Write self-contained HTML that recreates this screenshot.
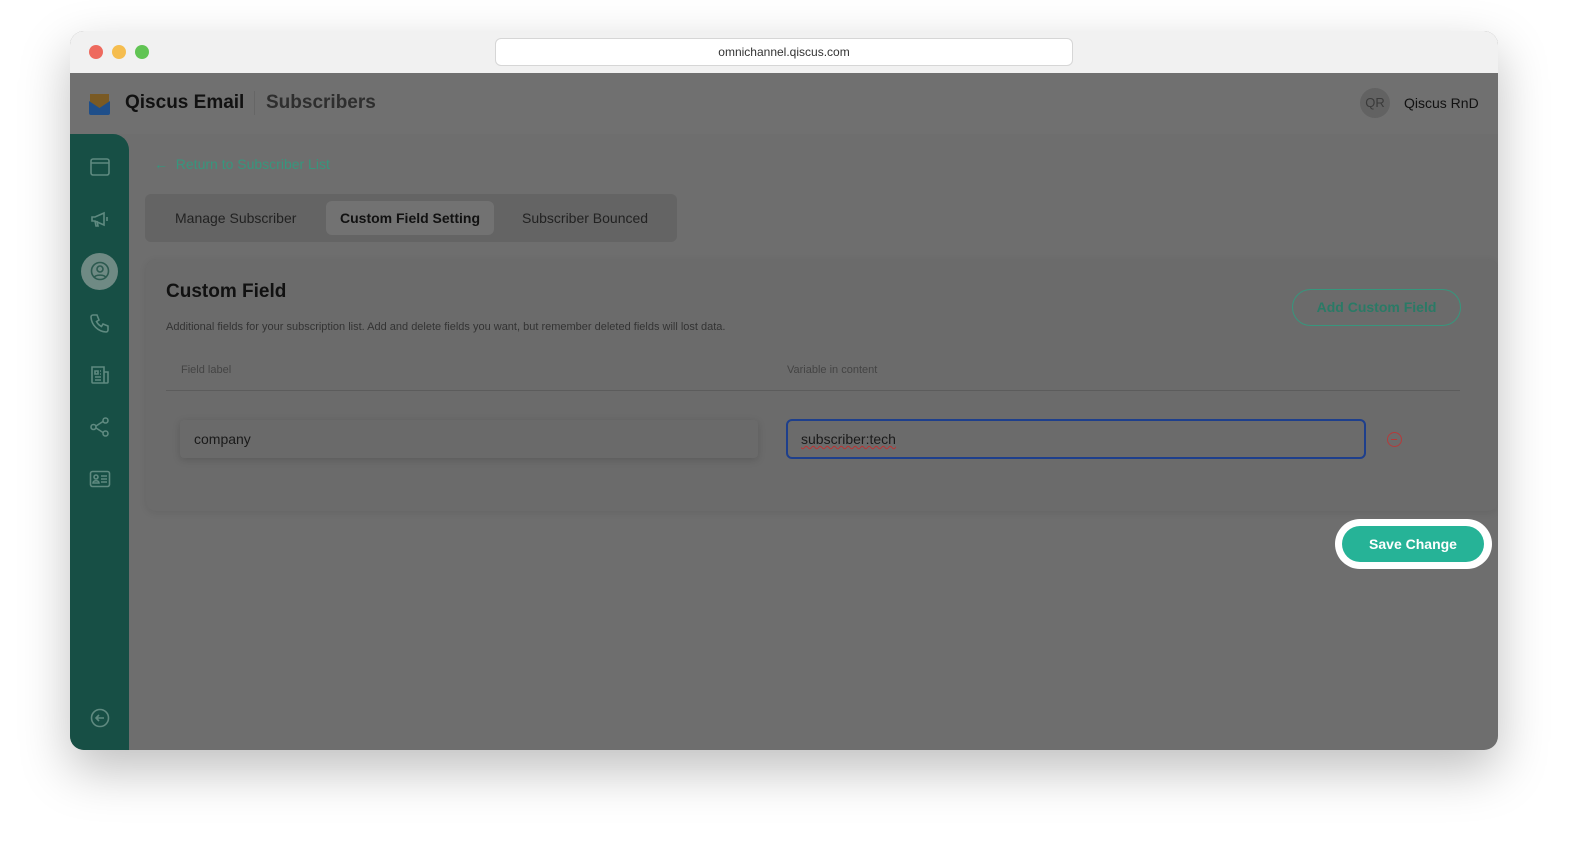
<!DOCTYPE html>
<html style="width:1580px;height:866px;overflow:hidden"><head><meta charset="utf-8"><style>
*{box-sizing:border-box;margin:0;padding:0}
body{width:1580px;height:866px;background:#fff;font-family:"Liberation Sans",sans-serif;position:relative;overflow:hidden}
.win{position:absolute;left:70px;top:31px;width:1428px;height:719px;border-radius:14px;overflow:hidden;box-shadow:0 20px 50px rgba(0,0,0,.25);background:#6e6e6e}
.tb{position:absolute;left:0;top:0;width:100%;height:42px;background:#f1f1f1}
.dot{position:absolute;top:14px;width:14px;height:14px;border-radius:50%}
.url{position:absolute;left:425px;top:7px;width:578px;height:28px;background:#fff;border:1px solid #d6d6d6;border-radius:6px;font-size:12px;color:#333;text-align:center;line-height:26px}
.hdr{position:absolute;left:0;top:42px;width:100%;height:61px;background:#707070}
.side{position:absolute;left:0;top:103px;width:59px;height:616px;background:#174f45;border-top-right-radius:16px}
.ic{position:absolute;left:19px;width:22px;height:22px}
.card{position:absolute;left:76px;top:228px;width:1352px;height:252px;background:#6b6b6b;border-radius:10px;box-shadow:0 2px 8px rgba(0,0,0,.08)}
</style></head><body>
<div class="win">
 <div class="tb">
  <div class="dot" style="left:19px;background:#ee6a5e"></div>
  <div class="dot" style="left:42px;background:#f5bd4f"></div>
  <div class="dot" style="left:65px;background:#61c454"></div>
  <div class="url">omnichannel.qiscus.com</div>
 </div>
 <div class="hdr">
  <svg style="position:absolute;left:19px;top:20px" width="21" height="22" viewBox="0 0 21 22"><path d="M1 1h19v9l-9.5 5L1 10z" fill="#7a5a24"/><path d="M0 8l10.5 7L21 8v12a2 2 0 0 1-2 2H2a2 2 0 0 1-2-2z" fill="#1f4f8a"/></svg>
  <div style="position:absolute;left:55px;top:19px;font-size:19px;font-weight:bold;color:#111">Qiscus Email</div>
  <div style="position:absolute;left:184px;top:18px;width:1px;height:24px;background:#666"></div>
  <div style="position:absolute;left:196px;top:19px;font-size:19px;font-weight:bold;color:#2e2e2e">Subscribers</div>
  <div style="position:absolute;left:1290px;top:15px;width:30px;height:30px;border-radius:50%;background:#626262;color:#3a3a3a;font-size:13px;text-align:center;line-height:30px">QR</div>
  <div style="position:absolute;left:1334px;top:22px;font-size:14px;color:#111">Qiscus RnD</div>
 </div>
 <div class="side">
  <svg class="ic" style="top:22px" viewBox="0 0 22 22" fill="none" stroke="#5f8a80" stroke-width="1.6"><rect x="2" y="3" width="18" height="16" rx="2"/><path d="M2 7h18"/></svg>
  <svg class="ic" style="top:74px" viewBox="0 0 22 22" fill="none" stroke="#5f8a80" stroke-width="1.6"><path d="M3 9v4h3l9 4V5L6 9z M6 13l1 5h2l-1-5"/><path d="M18 9v4"/></svg>
  <div style="position:absolute;left:11px;top:119px;width:37px;height:37px;border-radius:50%;background:#6f8a84"></div>
  <svg class="ic" style="top:126px" viewBox="0 0 22 22" fill="none" stroke="#2d5a50" stroke-width="1.6"><circle cx="11" cy="11" r="8.5"/><circle cx="11" cy="9" r="3"/><path d="M5.5 17c1.5-2.5 9.5-2.5 11 0"/></svg>
  <svg class="ic" style="top:178px" viewBox="0 0 22 22" fill="none" stroke="#5f8a80" stroke-width="1.6"><path d="M4 3h4l2 5-2.5 1.5a11 11 0 0 0 5 5L14 12l5 2v4a2 2 0 0 1-2 2A16 16 0 0 1 2 5a2 2 0 0 1 2-2z"/></svg>
  <svg class="ic" style="top:230px" viewBox="0 0 22 22" fill="none" stroke="#5f8a80" stroke-width="1.6"><path d="M3 3h12v16H4a1 1 0 0 1-1-1z M15 8h4v10a1 1 0 0 1-1 1h-3"/><path d="M6 7h3v3H6z M11 7h1 M11 10h1 M6 13h6 M6 16h6"/></svg>
  <svg class="ic" style="top:282px" viewBox="0 0 22 22" fill="none" stroke="#5f8a80" stroke-width="1.6"><circle cx="4.5" cy="11" r="2.5"/><circle cx="16.5" cy="4.5" r="2.5"/><circle cx="16.5" cy="17.5" r="2.5"/><path d="M7 10l7-4.5 M7 12l7 4.5"/></svg>
  <svg class="ic" style="top:334px" viewBox="0 0 22 22" fill="none" stroke="#5f8a80" stroke-width="1.6"><rect x="1.5" y="3.5" width="19" height="15" rx="2"/><circle cx="7" cy="9" r="2"/><path d="M4 15c0-3 6-3 6 0z M12 8h6 M12 11h6 M12 14h6"/></svg>
  <svg class="ic" style="top:573px" viewBox="0 0 22 22" fill="none" stroke="#5f8a80" stroke-width="1.6"><circle cx="11" cy="11" r="8.5"/><path d="M15 11H7 M10 8l-3 3 3 3"/></svg>
 </div>
 <div style="position:absolute;left:84px;top:125px;font-size:14px;color:#37967d">← &nbsp;Return to Subscriber List</div>
 <div style="position:absolute;left:75px;top:163px;width:532px;height:48px;background:#646464;border-radius:6px">
  <div style="position:absolute;left:30px;top:16px;font-size:14px;color:#222">Manage Subscriber</div>
  <div style="position:absolute;left:181px;top:7px;width:168px;height:34px;background:#727272;border-radius:6px;font-size:14px;font-weight:bold;color:#111;text-align:center;line-height:34px">Custom Field Setting</div>
  <div style="position:absolute;left:377px;top:16px;font-size:14px;color:#222">Subscriber Bounced</div>
 </div>
 <div class="card">
  <div style="position:absolute;left:20px;top:22px;font-size:19px;font-weight:bold;color:#111">Custom Field</div>
  <div style="position:absolute;left:20px;top:62px;font-size:11px;color:#333">Additional fields for your subscription list. Add and delete fields you want, but remember deleted fields will lost data.</div>
  <div style="position:absolute;left:1146px;top:30px;width:169px;height:37px;border:1.5px solid #37967d;border-radius:19px;font-size:14px;font-weight:bold;color:#2a7a66;text-align:center;line-height:34px">Add Custom Field</div>
  <div style="position:absolute;left:35px;top:105px;font-size:11px;color:#444">Field label</div>
  <div style="position:absolute;left:641px;top:105px;font-size:11px;color:#444">Variable in content</div>
  <div style="position:absolute;left:20px;top:131px;width:1294px;height:1px;background:#5c5c5c"></div>
  <div style="position:absolute;left:34px;top:161px;width:578px;height:38px;background:#6a6a6a;border-radius:4px;box-shadow:0 2px 8px rgba(0,0,0,.15);font-size:14px;color:#1a1a1a;line-height:38px;padding-left:14px">company</div>
  <div style="position:absolute;left:640px;top:160px;width:580px;height:40px;border:2px solid #1e3f8c;border-radius:6px;font-size:14px;color:#1a1a1a;line-height:36px;padding-left:13px"><span style="text-decoration:underline wavy #b33;text-decoration-thickness:1px">subscriber:tech</span></div>
  <div style="position:absolute;left:1241px;top:173px;width:15px;height:15px;border:1.5px solid #b53a3a;border-radius:50%"><div style="position:absolute;left:3px;top:5.5px;width:6px;height:1.5px;background:#b53a3a"></div></div>
 </div>
</div>
<div style="position:absolute;left:1335px;top:519px;width:157px;height:50px;background:#fff;border-radius:25px"></div>
<div style="position:absolute;left:1342px;top:526px;width:142px;height:36px;background:#26b397;border-radius:18px;font-size:14px;font-weight:bold;color:#fff;text-align:center;line-height:36px">Save Change</div>
</body></html>
